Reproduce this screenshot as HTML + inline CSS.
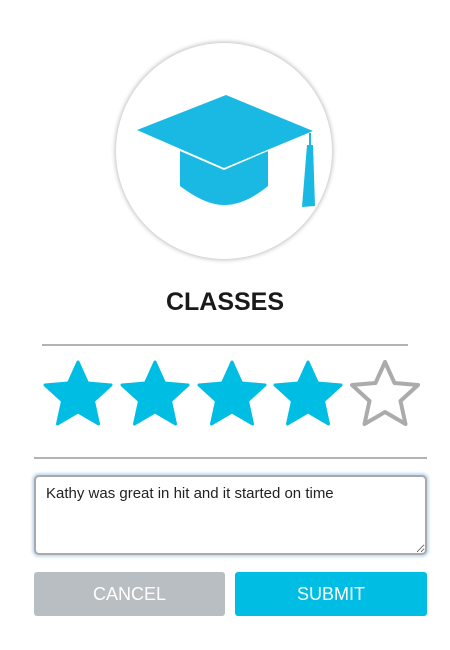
<!DOCTYPE html>
<html><head><style>
body{margin:0;width:450px;height:650px;background:#fff;font-family:"Liberation Sans",sans-serif;position:relative;overflow:hidden}
.abs{position:absolute}
.circle{left:116px;top:43px;width:216px;height:216px;border-radius:50%;background:#fff;box-shadow:0 0 4px 1px rgba(0,0,0,.25)}
h1{position:absolute;left:0;width:450px;top:288px;margin:0;text-align:center;font-size:25px;font-weight:bold;color:#1a1a1a}
.line{height:2px;background:#b3b3b3}
textarea{position:absolute;left:34px;top:475px;width:393px;height:80px;box-sizing:border-box;border:2px solid #a9a9a9;border-radius:5px;box-shadow:0 0 2px 2px #c5dcf3;font-family:"Liberation Sans",sans-serif;font-size:15px;color:#222;padding:8px 10px;resize:both}
.btn{top:572px;height:44px;border-radius:3px;color:#fff;font-size:18px;text-align:center;line-height:44px}
</style></head><body>
<div class="abs circle"></div>
<svg class="abs" style="left:0;top:0" width="450" height="280">
<path d="M180 151 L180 186 Q205 205 224 205 Q245 205 268 186 L268 151 L224 170 Z" fill="#1ab9e3"/>
<path d="M137 130 L226 95 L313 131 L224 168 Z" fill="#1ab9e3"/>
<path d="M310 133 L310 146" stroke="#1ab9e3" stroke-width="2"/>
<path d="M307 145 L313 145 L315 206 L302 207 Z" fill="#1ab9e3"/>
</svg>
<h1>CLASSES</h1>
<div class="abs line" style="left:42px;top:344px;width:366px"></div>
<svg class="abs" style="left:0;top:358px" width="450" height="75">
<defs><path id="s" d="M0 -33 L9.5 -12 L33 -10 L15.5 6 L20.5 29 L0 17 L-20.5 29 L-15.5 6 L-33 -10 L-9.5 -12 Z" stroke-linejoin="round"/></defs>
<use href="#s" x="78" y="37" fill="#00bde3" stroke="#00bde3" stroke-width="3"/>
<use href="#s" x="155" y="37" fill="#00bde3" stroke="#00bde3" stroke-width="3"/>
<use href="#s" x="232" y="37" fill="#00bde3" stroke="#00bde3" stroke-width="3"/>
<use href="#s" x="308" y="37" fill="#00bde3" stroke="#00bde3" stroke-width="3"/>
<use href="#s" x="385" y="37" fill="#fff" stroke="#ababab" stroke-width="4"/>
</svg>
<div class="abs line" style="left:34px;top:457px;width:393px"></div>
<textarea>Kathy was great in hit and it started on time</textarea>
<div class="abs btn" style="left:34px;width:191px;background:#b9bec2">CANCEL</div>
<div class="abs btn" style="left:235px;width:192px;background:#00bde3">SUBMIT</div>
</body></html>
